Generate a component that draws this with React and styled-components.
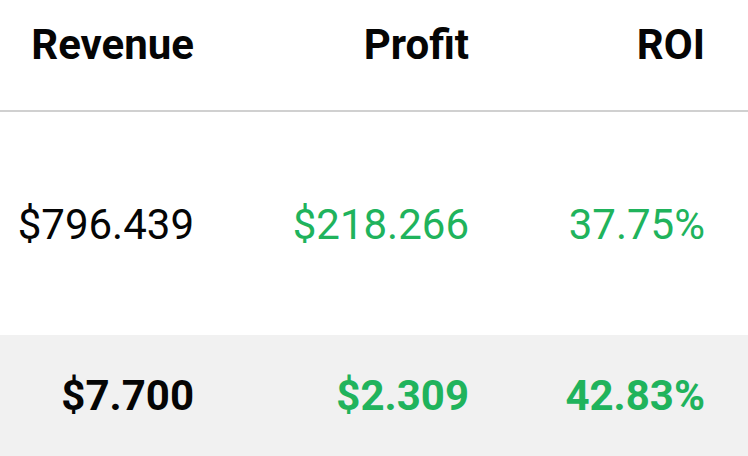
import React from 'react';
import styled, {createGlobalStyle} from 'styled-components';

const GlobalStyle = createGlobalStyle`
    body{
        margin:0;
        background:white;
        font-family: Roboto, "Noto Sans", sans-serif;
    }
`

const rows = [
    {revenue: '$796.439', profit: '$218.266', roi: '37.75%'},
];
const total = {revenue: '$7.700', profit: '$2.309', roi: '42.83%'};

const App = () => {
    return(
        <>
        <GlobalStyle/>
        <Table>
            <HeadRow>
                <Cell>Revenue</Cell>
                <Cell>Profit</Cell>
                <Cell>ROI</Cell>
            </HeadRow>
            {rows.map((row) => (
                <BodyRow key={row.revenue}>
                    <Cell>{row.revenue}</Cell>
                    <Cell positive>{row.profit}</Cell>
                    <Cell positive>{row.roi}</Cell>
                </BodyRow>
            ))}
            <TotalRow>
                <Cell>{total.revenue}</Cell>
                <Cell positive>{total.profit}</Cell>
                <Cell positive>{total.roi}</Cell>
            </TotalRow>
        </Table>
        </>
    )
};

const Table = styled.div`
    width:748px;
    height:456px;
    overflow:hidden;
    font-size:42px;
    color:#050505;
`
const Row = styled.div`
    display:grid;
    grid-template-columns: 237px 275px 236px;
`
const HeadRow = styled(Row)`
    font-weight:700;
    padding:20px 0 41px;
    border-bottom:2px solid #d0d0d0;
`
const BodyRow = styled(Row)`
    font-weight:400;
    padding:88px 0 86px;
`
const TotalRow = styled(Row)`
    font-weight:700;
    background:#f1f1f1;
    padding:36px 0 36px;
`
const Cell = styled.div`
    text-align:right;
    padding-right:43px;
    white-space:nowrap;
    color:${props => props.positive ? '#20b35c' : 'inherit'};
`

export default App;
